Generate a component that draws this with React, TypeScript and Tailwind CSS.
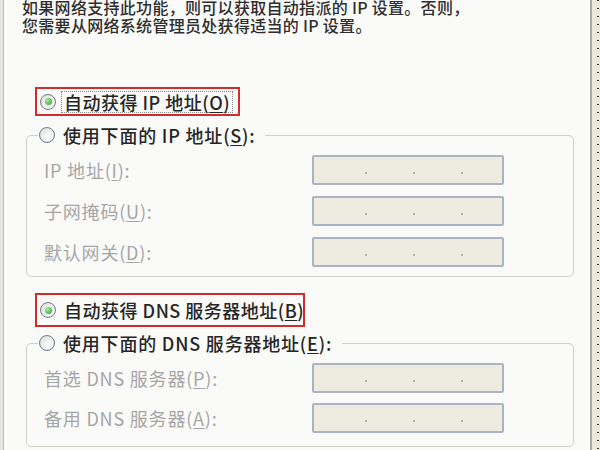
import React from 'react';

const Radio: React.FC<{ checked?: boolean }> = ({ checked }) => (
    <span className="w-[16px] h-[16px] rounded-full border border-[#6f7d8e] bg-[radial-gradient(circle_at_60%_60%,#ffffff,#d9d9d3)] flex items-center justify-center shrink-0">
        {checked && (
            <span className="w-[7px] h-[7px] rounded-full bg-[radial-gradient(circle_at_35%_35%,#a6ec9c,#27992a)]" />
        )}
    </span>
);

const Key: React.FC<{ k: string }> = ({ k }) => (
    <span>
        (<span className="underline underline-offset-2">{k}</span>)
    </span>
);

const IpBox: React.FC = () => (
    <div className="w-[192px] h-[30px] rounded-[2px] border-2 border-[#a9b3c1] bg-[#eeebe1] flex items-end pb-[9px] pl-[51px] gap-[46px] shrink-0">
        <span className="w-[2px] h-[2px] bg-[#b3b1a8]" />
        <span className="w-[2px] h-[2px] bg-[#b3b1a8]" />
        <span className="w-[2px] h-[2px] bg-[#b3b1a8]" />
    </div>
);

interface Field {
    label: React.ReactNode;
}

const Group: React.FC<{
    legend: React.ReactNode;
    fields: Field[];
    rowGap: string;
    className: string;
}> = ({ legend, fields, rowGap, className }) => (
    <fieldset className={`ml-[22px] w-[548px] border border-[#d3d1c6] rounded-[5px] ${className}`}>
        <legend className="ml-[11px] pl-[1px] pr-[10px]">
            <div className="h-[18px] flex items-center gap-[8px]">
                <Radio />
                <span className="whitespace-nowrap text-[18px] leading-[18px] tracking-[0.8px] font-medium text-[#262626]">{legend}</span>
            </div>
        </legend>
        <div className={`pt-[11px] pl-[17px] flex flex-col ${rowGap}`}>
            {fields.map((f, i) => (
                <div key={i} className="flex items-center">
                    <span className="w-[268px] whitespace-nowrap text-[18px] leading-[18px] tracking-[0.8px] text-[#a6a6a6]">{f.label}</span>
                    <IpBox />
                </div>
            ))}
        </div>
    </fieldset>
);

export default function App() {
    return (
        <div className="w-[600px] h-[450px] overflow-hidden flex bg-[#ece9d8] font-['Noto_Sans_CJK_SC',sans-serif]">
            <div className="w-[3px] bg-[#e6e5df]" />
            <div className="flex-1 border-l border-r-2 border-l-[#b9b9b4] border-r-[#a3a9aa] bg-[#fafaf8]">
                <div className="ml-[18px] -mt-[2px] whitespace-nowrap text-[16px] leading-[18px] tracking-[0.3px] font-medium text-[#2e2e2e]">
                    <p>如果网络支持此功能，则可以获取自动指派的 IP 设置。否则，</p>
                    <p>您需要从网络系统管理员处获得适当的 IP 设置。</p>
                </div>

                <div className="mt-[53px] ml-[31px] w-[205px] h-[29px] border-2 border-[#cf2d2d] flex items-center pl-[3px] gap-[5px]">
                    <Radio checked />
                    <span className="border border-dotted border-[#8a8a8a] px-[2px] h-[22px] flex items-center whitespace-nowrap text-[18px] leading-[18px] tracking-[0.5px] font-medium text-[#262626]">
                        自动获得 IP 地址<Key k="O" />
                    </span>
                </div>

                <Group
                    className="mt-[10px] pb-[9px]"
                    rowGap="gap-[11px]"
                    legend={<>使用下面的 IP 地址<Key k="S" />:</>}
                    fields={[
                        { label: <>IP 地址<Key k="I" />:</> },
                        { label: <>子网掩码<Key k="U" />:</> },
                        { label: <>默认网关<Key k="D" />:</> },
                    ]}
                />

                <div className="mt-[16px] ml-[31px] w-[270px] h-[34px] border-2 border-[#cf2d2d] flex items-center pl-[3px] gap-[8px]">
                    <Radio checked />
                    <span className="whitespace-nowrap text-[18px] leading-[18px] tracking-[0.5px] font-medium text-[#262626]">
                        自动获得 DNS 服务器地址<Key k="B" />
                    </span>
                </div>

                <Group
                    className="mt-[7px] pb-[13px]"
                    rowGap="gap-[10px]"
                    legend={<>使用下面的 DNS 服务器地址<Key k="E" />:</>}
                    fields={[
                        { label: <>首选 DNS 服务器<Key k="P" />:</> },
                        { label: <>备用 DNS 服务器<Key k="A" />:</> },
                    ]}
                />
            </div>
            <div className="w-[8px] flex justify-end pr-[1px]">
                <div className="w-[2px] h-full bg-[repeating-linear-gradient(to_bottom,#3c3c3c_0px,#3c3c3c_1px,transparent_1px,transparent_8px)]" />
            </div>
        </div>
    );
}
